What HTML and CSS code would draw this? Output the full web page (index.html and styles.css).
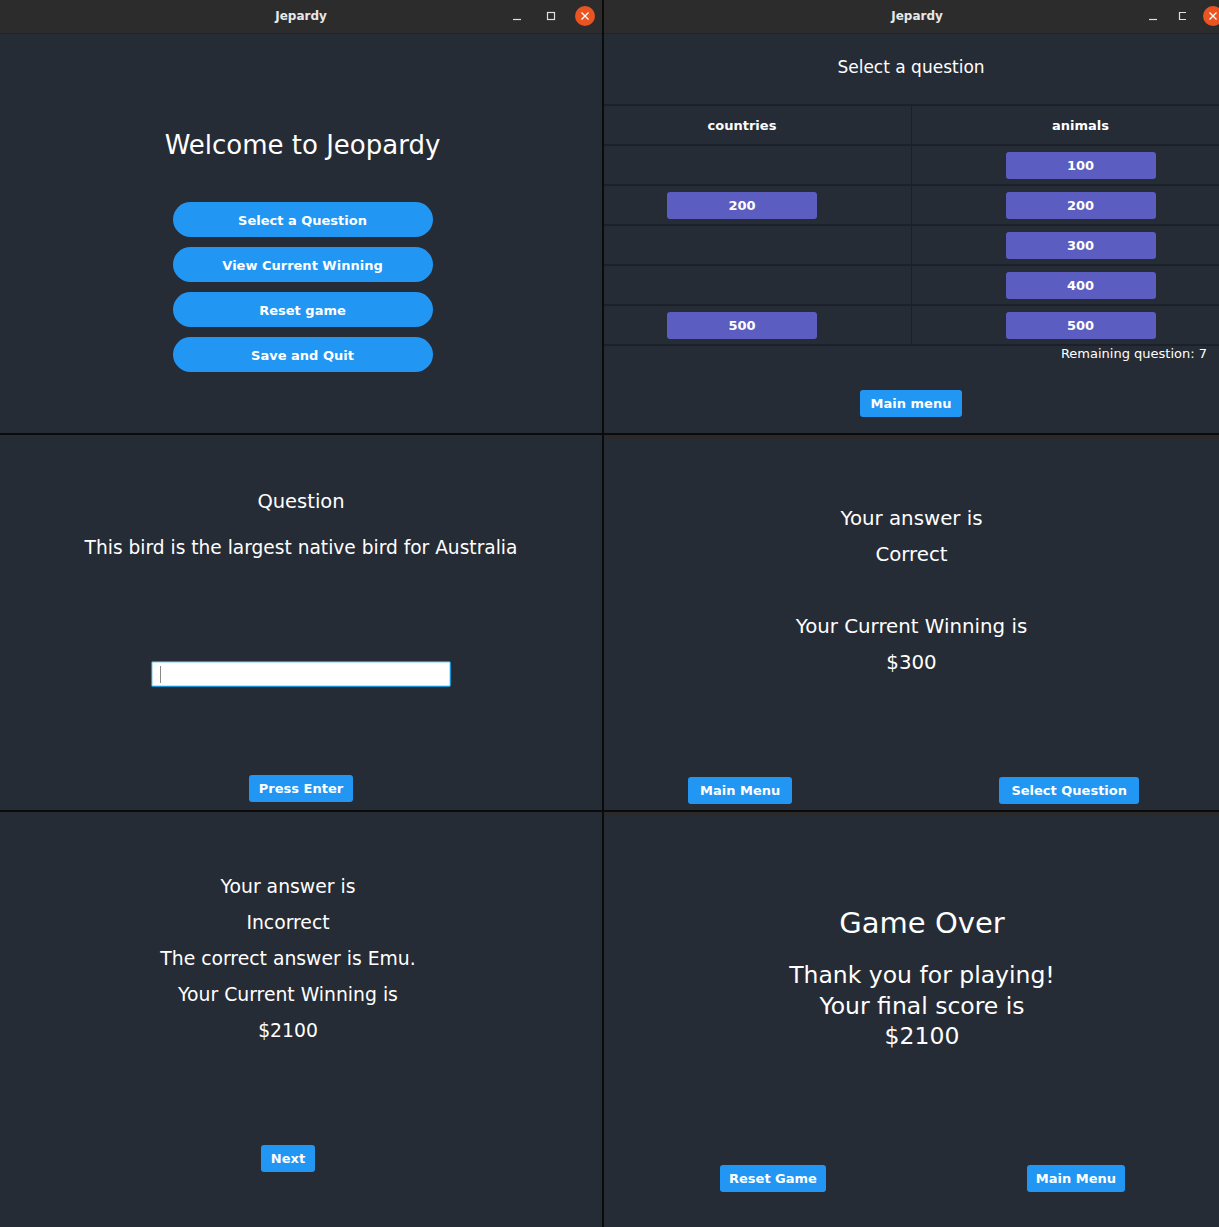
FILE: index.html
```html
<!DOCTYPE html>
<html lang="en">
<head>
<meta charset="utf-8">
<title>Jepardy</title>
<link rel="stylesheet" href="styles.css">
</head>
<body>
<div class="screen">

  <!-- Main menu window -->
  <section class="win">
    <header class="titlebar">
      <span class="titlebar-title">Jepardy</span>
      <div class="controls">
        <span class="ctl"><svg width="10" height="10" viewBox="0 0 10 10"><path d="M1 8.5h8" stroke="#e0e0e0" stroke-width="1.2"/></svg></span>
        <span class="ctl"><svg width="10" height="10" viewBox="0 0 10 10"><rect x="1.5" y="1.5" width="7" height="7" fill="none" stroke="#e0e0e0" stroke-width="1.2"/></svg></span>
        <span class="ctl close"><svg width="22" height="22" viewBox="0 0 22 22"><circle cx="11" cy="11" r="10" fill="#e95420"/><path d="M7.5 7.5l7 7M14.5 7.5l-7 7" stroke="#fff" stroke-width="1.3"/></svg></span>
      </div>
    </header>
    <main class="menu">
      <h1 class="welcome">Welcome to Jeopardy</h1>
      <div class="menu-buttons">
        <button class="pill">Select a Question</button>
        <button class="pill">View Current Winning</button>
        <button class="pill">Reset game</button>
        <button class="pill">Save and Quit</button>
      </div>
    </main>
  </section>

  <!-- Board window -->
  <section class="win">
    <header class="titlebar titlebar-wide">
      <span class="titlebar-title">Jepardy</span>
      <div class="controls controls-tight">
        <span class="ctl"><svg width="10" height="10" viewBox="0 0 10 10"><path d="M1 8.5h8" stroke="#e0e0e0" stroke-width="1.2"/></svg></span>
        <span class="ctl"><svg width="10" height="10" viewBox="0 0 10 10"><path d="M8 1.5H1.5v7H8" fill="none" stroke="#e0e0e0" stroke-width="1.2"/></svg></span>
        <span class="ctl close"><svg width="22" height="22" viewBox="0 0 22 22"><circle cx="11" cy="11" r="10" fill="#e95420"/><path d="M7.5 7.5l7 7M14.5 7.5l-7 7" stroke="#fff" stroke-width="1.3"/></svg></span>
      </div>
    </header>
    <main class="board">
      <h2 class="board-title">Select a question</h2>
      <div class="grid">
        <div class="cell head">countries</div>
        <div class="cell head">animals</div>
        <div class="cell"></div>
        <div class="cell"><button class="val">100</button></div>
        <div class="cell"><button class="val">200</button></div>
        <div class="cell"><button class="val">200</button></div>
        <div class="cell"></div>
        <div class="cell"><button class="val">300</button></div>
        <div class="cell"></div>
        <div class="cell"><button class="val">400</button></div>
        <div class="cell"><button class="val">500</button></div>
        <div class="cell"><button class="val">500</button></div>
      </div>
      <p class="remaining">Remaining question: 7</p>
      <button class="btn board-menu">Main menu</button>
    </main>
  </section>

  <!-- Question window -->
  <section class="win">
    <main class="question">
      <h2 class="q-label">Question</h2>
      <p class="q-text">This bird is the largest native bird for Australia</p>
      <div class="field" role="textbox"><span class="caret"></span></div>
      <button class="btn enter">Press Enter</button>
    </main>
  </section>

  <!-- Correct answer window -->
  <section class="win win-strip">
    <main class="result">
      <div class="lines lines-lg">
        <p>Your answer is</p>
        <p class="spaced">Correct</p>
        <p>Your Current Winning is</p>
        <p>$300</p>
      </div>
      <div class="actions actions-correct">
        <button class="btn btn-wide">Main Menu</button>
        <button class="btn btn-wide">Select Question</button>
      </div>
    </main>
  </section>

  <!-- Incorrect answer window -->
  <section class="win">
    <main class="result result-left">
      <div class="lines">
        <p>Your answer is</p>
        <p>Incorrect</p>
        <p>The correct answer is Emu.</p>
        <p>Your Current Winning is</p>
        <p>$2100</p>
      </div>
      <div class="actions actions-center">
        <button class="btn">Next</button>
      </div>
    </main>
  </section>

  <!-- Game over window -->
  <section class="win win-strip">
    <main class="gameover">
      <div class="over-text">
        <h2 class="over-title">Game Over</h2>
        <p>Thank you for playing!</p>
        <p>Your final score is</p>
        <p>$2100</p>
      </div>
      <div class="actions actions-over">
        <button class="btn btn-narrow">Reset Game</button>
        <button class="btn btn-narrow">Main Menu</button>
      </div>
    </main>
  </section>

</div>
</body>
</html>
```

FILE: styles.css
```css
* {
  box-sizing: border-box;
  margin: 0;
  padding: 0;
}

body {
  background: #0b0b0b;
  font-family: "DejaVu Sans", "Liberation Sans", sans-serif;
}

button {
  font-family: "DejaVu Sans", "Liberation Sans", sans-serif;
  border: none;
  color: #fff;
  cursor: pointer;
}

.screen {
  display: grid;
  grid-template-columns: 602px 615px;
  grid-template-rows: 433px 375px 415px;
  gap: 2px;
  width: 1219px;
  height: 1227px;
  background: #0b0b0b;
}

.win {
  background: #262c36;
  color: #fff;
  overflow: hidden;
}

.win-strip {
  border-top: 4px solid #2a2a2a;
}

/* Title bar */
.titlebar {
  display: grid;
  grid-template-columns: 1fr auto 1fr;
  align-items: center;
  height: 34px;
  background: #2c2c2c;
  border-bottom: 1px solid #232323;
}

.titlebar-wide {
  width: 626px;
}

.titlebar-title {
  grid-column: 2;
  font-weight: bold;
  font-size: 12px;
  color: #e8e8e8;
  padding-bottom: 2px;
}

.controls {
  grid-column: 3;
  justify-self: end;
  display: flex;
  align-items: center;
  gap: 12px;
  margin-right: 6px;
  padding-bottom: 2px;
}

.controls-tight {
  gap: 8px;
}

.ctl {
  width: 22px;
  height: 22px;
  display: flex;
  align-items: center;
  justify-content: center;
}

.ctl svg {
  display: block;
}

/* Main menu */
.menu {
  display: flex;
  flex-direction: column;
  align-items: center;
  padding-top: 96px;
  padding-left: 3px;
}

.welcome {
  font-size: 26px;
  font-weight: normal;
  line-height: 30px;
}

.menu-buttons {
  margin-top: 42px;
  display: flex;
  flex-direction: column;
  gap: 10px;
}

.pill {
  width: 260px;
  height: 35px;
  border-radius: 18px;
  background: #2196f3;
  font-weight: bold;
  font-size: 13px;
  padding-top: 1px;
}

/* Board */
.board {
  width: 676px;
  margin-left: -31px;
  display: flex;
  flex-direction: column;
  align-items: center;
}

.board-title {
  font-size: 17px;
  font-weight: normal;
  line-height: 20px;
  margin-top: 23px;
}

.grid {
  margin-top: 27px;
  width: 100%;
  display: grid;
  grid-template-columns: 1fr 1fr;
  border-bottom: 2px solid #1c2028;
}

.cell {
  height: 40px;
  border-top: 2px solid #1c2028;
  display: flex;
  align-items: center;
  justify-content: center;
}

.cell:nth-child(even) {
  border-left: 1px solid #1c2028;
}

.head {
  font-weight: bold;
  font-size: 13px;
}

.val {
  width: 150px;
  height: 27px;
  border-radius: 3px;
  background: #5b5ec0;
  font-weight: bold;
  font-size: 13px;
}

.remaining {
  align-self: stretch;
  text-align: right;
  padding-right: 42px;
  font-size: 13px;
  line-height: 16px;
}

.btn {
  height: 27px;
  padding: 0 10px;
  border-radius: 3px;
  background: #2196f3;
  font-weight: bold;
  font-size: 13px;
}

.btn-wide {
  padding: 0 12px;
}

.btn-narrow {
  padding: 0 9px;
}

.board-menu {
  margin-top: 28px;
  padding: 0 11px;
}

/* Question */
.question {
  display: flex;
  flex-direction: column;
  align-items: center;
  padding-top: 55px;
}

.q-label {
  font-size: 19.5px;
  font-weight: normal;
  line-height: 24px;
}

.q-text {
  font-size: 18.6px;
  line-height: 24px;
  margin-top: 22px;
}

.field {
  margin-top: 101px;
  width: 300px;
  height: 26px;
  background: #fff;
  border: 1px solid #1593d0;
  box-shadow: inset 0 0 0 1px #bfe4f6;
  border-radius: 2px;
  display: flex;
  align-items: center;
  padding-left: 8px;
}

.caret {
  width: 1px;
  height: 17px;
  background: #888;
}

.enter {
  margin-top: 88px;
}

/* Result windows */
.result {
  display: flex;
  flex-direction: column;
  padding-top: 62px;
}

.result-left {
  padding-top: 57px;
  padding-right: 26px;
}

.lines {
  text-align: center;
  font-size: 18.8px;
  line-height: 36px;
}

.lines-lg {
  font-size: 19.8px;
}

.spaced {
  margin-bottom: 36px;
}

.actions {
  display: flex;
  margin-top: 96px;
}

.actions-correct {
  justify-content: space-between;
  padding-left: 84px;
  padding-right: 80px;
}

.actions-center {
  justify-content: center;
}

/* Game over */
.gameover {
  display: flex;
  flex-direction: column;
  padding-top: 90px;
}

.over-text {
  text-align: center;
  padding-left: 21px;
  font-size: 23.5px;
  line-height: 30.5px;
}

.over-title {
  font-size: 29px;
  font-weight: normal;
  line-height: 34px;
  margin-bottom: 20px;
}

.actions-over {
  justify-content: space-between;
  padding-left: 116px;
  padding-right: 94px;
  margin-top: 113px;
}
```
